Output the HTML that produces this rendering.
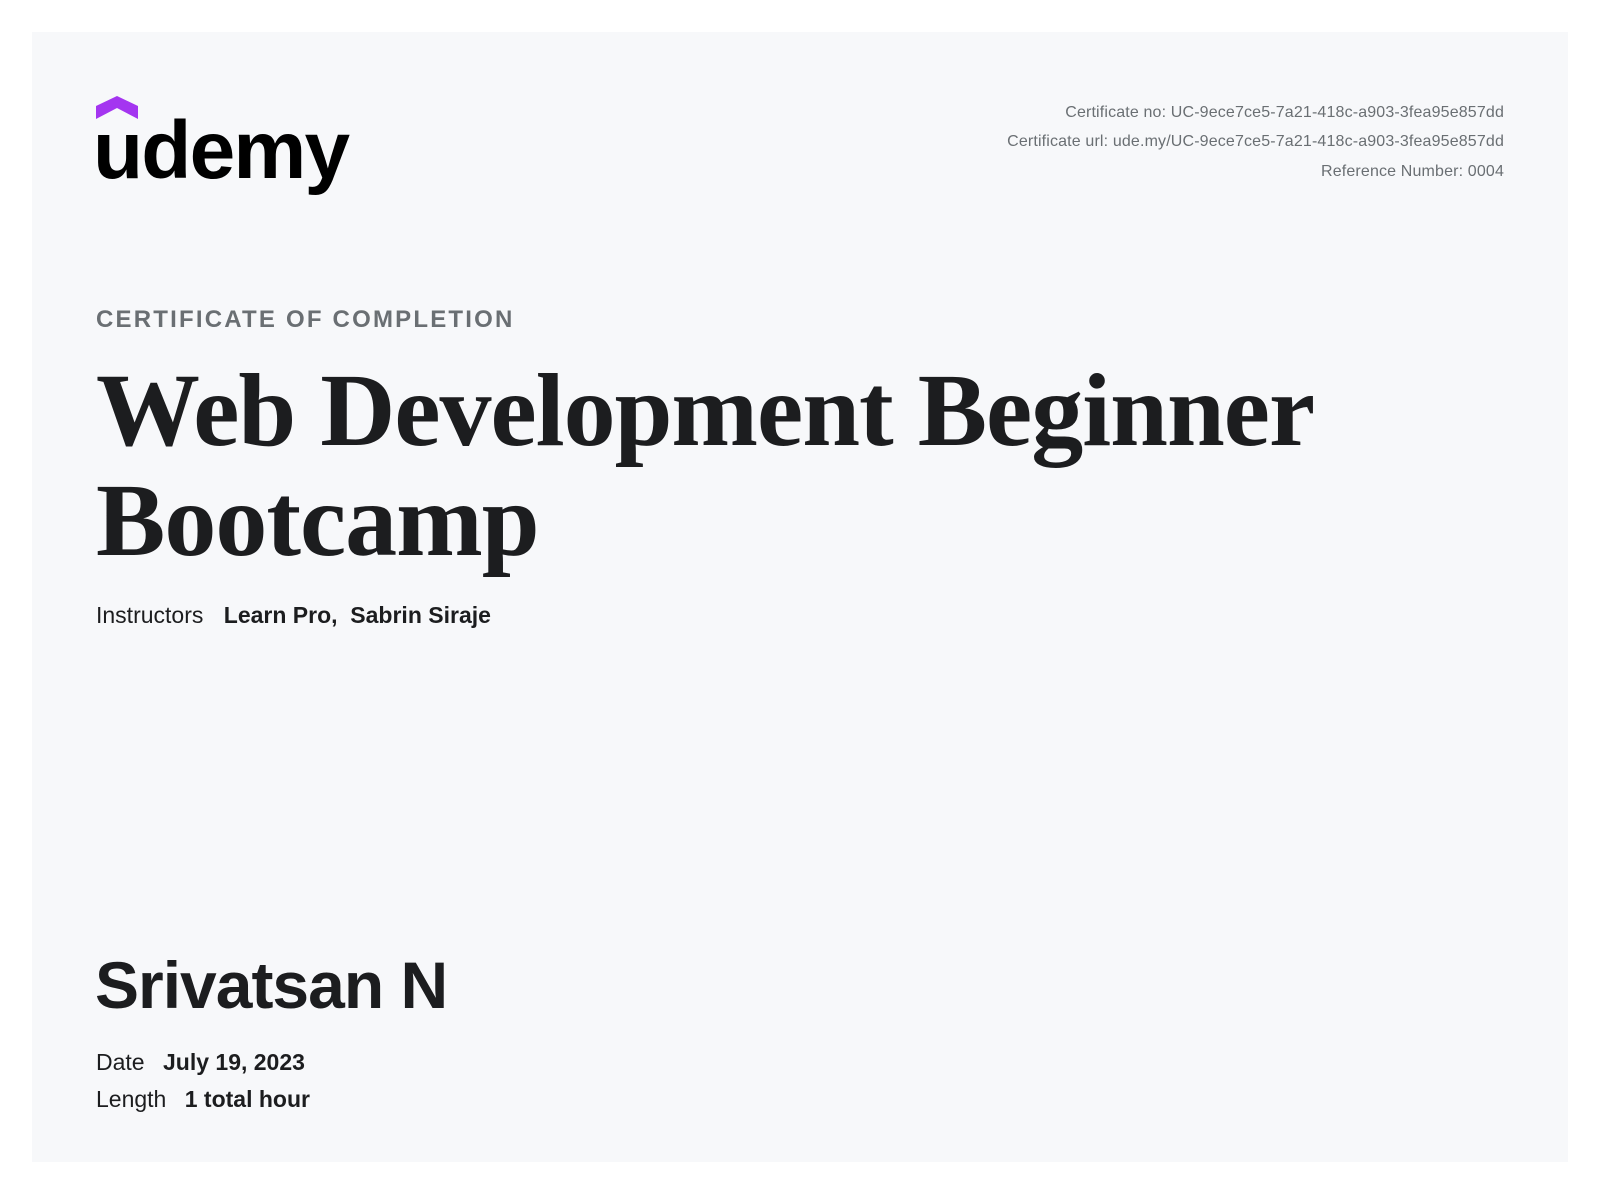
<!DOCTYPE html>
<html><head><meta charset="utf-8"><style>
html,body{margin:0;padding:0;background:#fff;width:1600px;height:1190px;overflow:hidden}
.card{position:absolute;left:32px;top:32px;width:1536px;height:1130px;background:#f7f8fa}
.abs{position:absolute;white-space:nowrap}
.sans{font-family:"Liberation Sans",sans-serif}
.meta{right:96px;font-size:16px;color:#6a6f73;text-align:right;letter-spacing:0.15px}
</style></head><body>
<div class="card"></div>
<svg class="abs" style="left:96px;top:96px" width="42" height="24" viewBox="0 0 42 24"><path d="M0 10 L21 0 L42 10 L42 23 L21 12 L0 23 Z" fill="#a435f0"/></svg>
<div class="abs sans" style="left:93px;top:106px;font-size:82px;font-weight:bold;letter-spacing:-1.8px;color:#000;line-height:90px">udemy</div>
<div class="abs sans meta" style="top:104px">Certificate no: UC-9ece7ce5-7a21-418c-a903-3fea95e857dd</div>
<div class="abs sans meta" style="top:133px">Certificate url: ude.my/UC-9ece7ce5-7a21-418c-a903-3fea95e857dd</div>
<div class="abs sans meta" style="top:163px">Reference Number: 0004</div>
<div class="abs sans" style="left:96px;top:306px;font-size:24px;font-weight:bold;letter-spacing:2.2px;color:#6a6f73">CERTIFICATE OF COMPLETION</div>
<div class="abs" style="left:96px;top:356px;font-family:'Liberation Serif',serif;font-weight:bold;font-size:104px;line-height:110px;color:#1c1d1f;letter-spacing:-1px">Web Development Beginner<br>Bootcamp</div>
<div class="abs sans" style="left:96px;top:602px;font-size:23px;color:#1c1d1f">Instructors <b style="margin-left:14px">Learn Pro,&nbsp; Sabrin Siraje</b></div>
<div class="abs sans" style="left:95px;top:947px;font-size:66px;font-weight:bold;color:#1c1d1f;letter-spacing:-1px">Srivatsan N</div>
<div class="abs sans" style="left:96px;top:1049px;font-size:23px;color:#1c1d1f">Date <b style="margin-left:12px">July 19, 2023</b></div>
<div class="abs sans" style="left:96px;top:1086px;font-size:23px;color:#1c1d1f">Length <b style="margin-left:12px">1 total hour</b></div>
</body></html>
